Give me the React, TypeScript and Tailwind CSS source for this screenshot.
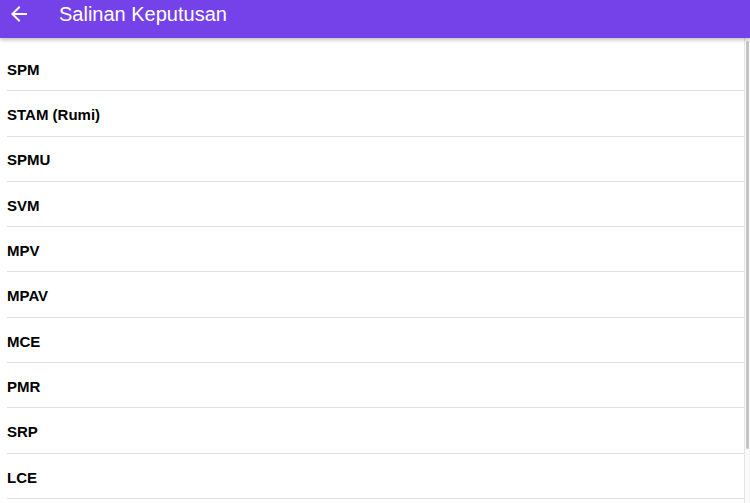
const subjects = ["SPM", "STAM (Rumi)", "SPMU", "SVM", "MPV", "MPAV", "MCE", "PMR", "SRP", "LCE"];

function BackArrow() {
    return (
        <svg width="24" height="24" viewBox="0 0 24 24" fill="white">
            <path d="M20 11H7.83l5.59-5.59L12 4l-8 8 8 8 1.41-1.41L7.83 13H20v-2z" />
        </svg>
    );
}

export default function App() {
    return (
        <div
            className="w-[750px] h-[503px] overflow-hidden bg-white flex flex-col"
            style={{ fontFamily: '"Liberation Sans", Arial, sans-serif' }}
        >
            <header className="relative z-10 h-[38px] shrink-0 bg-[#7442e8] flex items-start pt-[2px] pl-[7px] gap-[28px] shadow-[0_2px_4px_rgba(0,0,0,0.25)]">
                <BackArrow />
                <h1 className="text-white text-[20px] leading-[24px]">Salinan Keputusan</h1>
            </header>

            <div className="flex flex-1 min-h-0">
                <ul className="flex-1 pt-[8px]">
                    {subjects.map((name) => (
                        <li key={name} className="pl-[7px]">
                            <div className="h-[45.3px] flex items-center pt-[4px] border-b border-[#e0e0e0] text-[15px] font-bold text-black">
                                {name}
                            </div>
                        </li>
                    ))}
                </ul>
                <div className="w-[6px] shrink-0 border-l border-[#e6e6e6] bg-[#fafafa] pt-[3px]">
                    <div className="h-[408px] w-[3px] ml-[1px] rounded-full bg-[#c4c4c4]" />
                </div>
            </div>
        </div>
    );
}
